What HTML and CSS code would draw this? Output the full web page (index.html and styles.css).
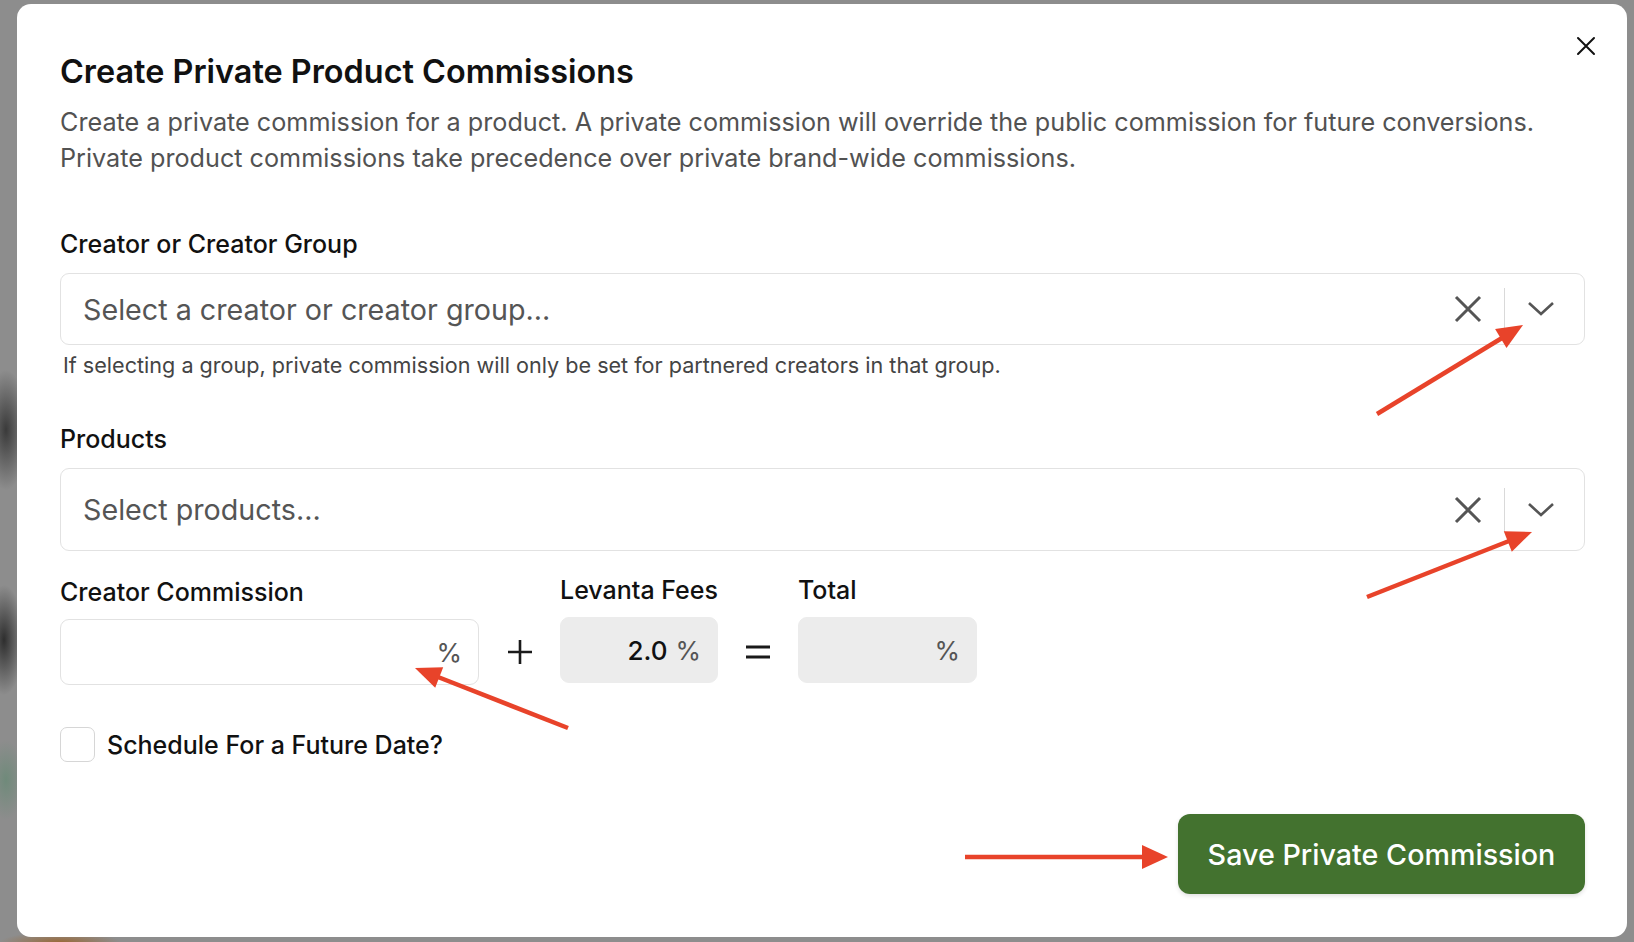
FILE: index.html
```html
<!DOCTYPE html>
<html lang="en">
<head>
  <meta charset="utf-8" />
  <meta name="viewport" content="width=device-width, initial-scale=1" />
  <title>Create Private Product Commissions</title>
  <link rel="stylesheet" href="styles.css">
</head>
<body>
  <div class="modal" role="dialog" aria-labelledby="modal-title">
    <button class="close-button" aria-label="Close">
      <svg width="20" height="20" viewBox="0 0 20 20"><path d="M2 2 L18 18 M18 2 L2 18" stroke="#111" stroke-width="2" stroke-linecap="round" /></svg>
    </button>

    <h1 id="modal-title">Create Private Product Commissions</h1>
    <p class="description">
      Create a private commission for a product. A private commission will override the public commission for future conversions.<br>
      Private product commissions take precedence over private brand-wide commissions.
    </p>

    <label class="field-label label-creator">Creator or Creator Group</label>
    <div class="select select-creator">
      <span class="select-placeholder">Select a creator or creator group...</span>
      <span class="select-clear">
        <svg width="28" height="28" viewBox="0 0 28 28"><path d="M2 2 L26 26 M26 2 L2 26" stroke="#555" stroke-width="3" /></svg>
      </span>
      <span class="select-divider"></span>
      <span class="select-toggle">
        <svg width="28" height="16" viewBox="0 0 28 16"><path d="M2 2 L14 13 L26 2" fill="none" stroke="#555" stroke-width="2.6" /></svg>
      </span>
    </div>
    <p class="helper">If selecting a group, private commission will only be set for partnered creators in that group.</p>

    <label class="field-label label-products">Products</label>
    <div class="select select-products">
      <span class="select-placeholder">Select products...</span>
      <span class="select-clear">
        <svg width="28" height="28" viewBox="0 0 28 28"><path d="M2 2 L26 26 M26 2 L2 26" stroke="#555" stroke-width="3" /></svg>
      </span>
      <span class="select-divider"></span>
      <span class="select-toggle">
        <svg width="28" height="16" viewBox="0 0 28 16"><path d="M2 2 L14 13 L26 2" fill="none" stroke="#555" stroke-width="2.6" /></svg>
      </span>
    </div>

    <div class="commission-grid">
      <span class="field-label grid-label">Creator Commission</span>
      <span></span>
      <span class="field-label grid-label label-up">Levanta Fees</span>
      <span></span>
      <span class="field-label grid-label label-up">Total</span>

      <div class="pct-input">
        <span class="pct">%</span>
      </div>
      <span class="operator">
        <svg width="26" height="26" viewBox="0 0 26 26"><path d="M13 1 V25 M1 13 H25" stroke="#1a1a1a" stroke-width="2.6" /></svg>
      </span>
      <div class="pct-input readonly">
        <span class="pct-value">2.0</span><span class="pct">%</span>
      </div>
      <span class="operator">
        <svg width="26" height="18" viewBox="0 0 26 18"><path d="M1 4 H25 M1 14 H25" stroke="#1a1a1a" stroke-width="3" /></svg>
      </span>
      <div class="pct-input readonly total">
        <span class="pct">%</span>
      </div>
    </div>

    <label class="schedule">
      <span class="checkbox"></span>
      <span>Schedule For a Future Date?</span>
    </label>

    <div class="modal-footer">
      <button class="save-button">Save Private Commission</button>
    </div>
  </div>

  <!-- pointer arrows drawn on top of the dialog -->
  <svg class="annotations" width="1634" height="942" viewBox="0 0 1634 942">
    <g stroke="#e8432a" stroke-width="4.5" fill="none">
      <line x1="1377" y1="414" x2="1502" y2="338" />
      <line x1="1367" y1="597" x2="1509" y2="541" />
      <line x1="568" y1="728" x2="438" y2="677" />
      <line x1="965" y1="857" x2="1144" y2="857" />
    </g>
    <g fill="#e8432a">
      <polygon points="1523,325 1506.5,347.9 1495.1,329.1" />
      <polygon points="1532,532 1511.8,551.7 1503.8,531.3" />
      <polygon points="415,668 443.2,667.3 435.2,687.7" />
      <polygon points="1168,857 1142,845 1142,869" />
    </g>
  </svg>
</body>
</html>
```

FILE: styles.css
```css
* {
  box-sizing: border-box;
}

body {
  margin: 0;
  width: 1634px;
  height: 942px;
  overflow: hidden;
  padding: 4px 7px 0 17px;
  font-family: Inter, 'Noto Sans', sans-serif;
  color: #111;
  background-color: #8d8d8d;
  background-image:
    radial-gradient(ellipse 22px 60px at 6px 430px, #3a3a3a, transparent),
    radial-gradient(ellipse 20px 55px at 4px 640px, #2e2e2e, transparent),
    radial-gradient(ellipse 18px 40px at 6px 780px, #6f8a7a, transparent),
    radial-gradient(ellipse 60px 10px at 60px 942px, #9a6a3a, transparent);
  position: relative;
}

.modal {
  position: relative;
  width: 1610px;
  height: 933px;
  background: #fff;
  border-radius: 14px;
  padding: 51px 42px 43px 43px;
  display: flex;
  flex-direction: column;
}

.close-button {
  position: absolute;
  top: 32px;
  right: 31px;
  width: 20px;
  height: 20px;
  padding: 0;
  border: none;
  background: none;
  cursor: pointer;
}

.close-button svg {
  display: block;
}

h1 {
  margin: 0;
  font-size: 32.4px;
  line-height: 34px;
  font-weight: 600;
  color: #111;
}

.description {
  margin: 15px 0 0;
  font-size: 25.2px;
  line-height: 36px;
  color: #525252;
  white-space: nowrap;
}

.field-label {
  display: block;
  font-size: 25px;
  line-height: 30px;
  font-weight: 500;
  color: #111;
}

.label-creator {
  margin-top: 53px;
}

.label-products {
  margin-top: 47px;
}

.select {
  margin-top: 14px;
  display: flex;
  align-items: center;
  border: 1px solid #e2e2e2;
  border-radius: 9px;
  padding-left: 22px;
  padding-right: 7px;
}

.select-creator {
  height: 72px;
}

.select-products {
  height: 83px;
}

.select-placeholder {
  flex: 1;
  font-size: 28.7px;
  color: #555;
}

.select-clear {
  width: 50px;
  display: flex;
  justify-content: center;
  margin-right: 11px;
}

.select-divider {
  width: 1px;
  height: 42px;
  background: #d9d9d9;
}

.select-products .select-divider {
  height: 44px;
}

.select-toggle {
  width: 72px;
  display: flex;
  justify-content: center;
}

.select svg {
  display: block;
}

.helper {
  margin: 8px 0 0 3px;
  font-size: 21.6px;
  line-height: 24px;
  color: #444;
}

.commission-grid {
  margin-top: 26px;
  display: grid;
  grid-template-columns: 419px 81px 158px 80px 179px;
  row-gap: 12px;
  align-items: center;
}

.label-up {
  position: relative;
  top: -2px;
}

.pct-input {
  height: 66px;
  border: 1px solid #e2e2e2;
  border-radius: 9px;
  display: flex;
  align-items: center;
  justify-content: flex-end;
  padding-right: 16px;
  font-size: 26px;
}

.pct-input.readonly {
  background: #ececec;
  border-color: #ececec;
  position: relative;
  top: -2px;
}

.pct-value {
  color: #111;
  font-weight: 500;
  margin-right: 8px;
}

.pct {
  color: #555;
}

.operator {
  display: flex;
  justify-content: center;
}

.operator svg {
  display: block;
}

.schedule {
  margin-top: 42px;
  display: flex;
  align-items: center;
  gap: 12px;
  font-size: 25px;
  font-weight: 500;
  color: #111;
}

.checkbox {
  width: 35px;
  height: 35px;
  border: 1px solid #d6d6d6;
  border-radius: 7px;
  background: #fff;
}

.modal-footer {
  margin-top: auto;
  display: flex;
  justify-content: flex-end;
}

.save-button {
  width: 407px;
  height: 80px;
  border: none;
  border-radius: 12px;
  background-color: #43722f;
  color: #fff;
  font-family: inherit;
  font-size: 28.7px;
  font-weight: 500;
  cursor: pointer;
  box-shadow: 0 2px 4px rgba(0, 0, 0, 0.12);
}

.save-button:hover {
  background-color: #3a6428;
}

.annotations {
  position: absolute;
  top: 0;
  left: 0;
  pointer-events: none;
}
```
